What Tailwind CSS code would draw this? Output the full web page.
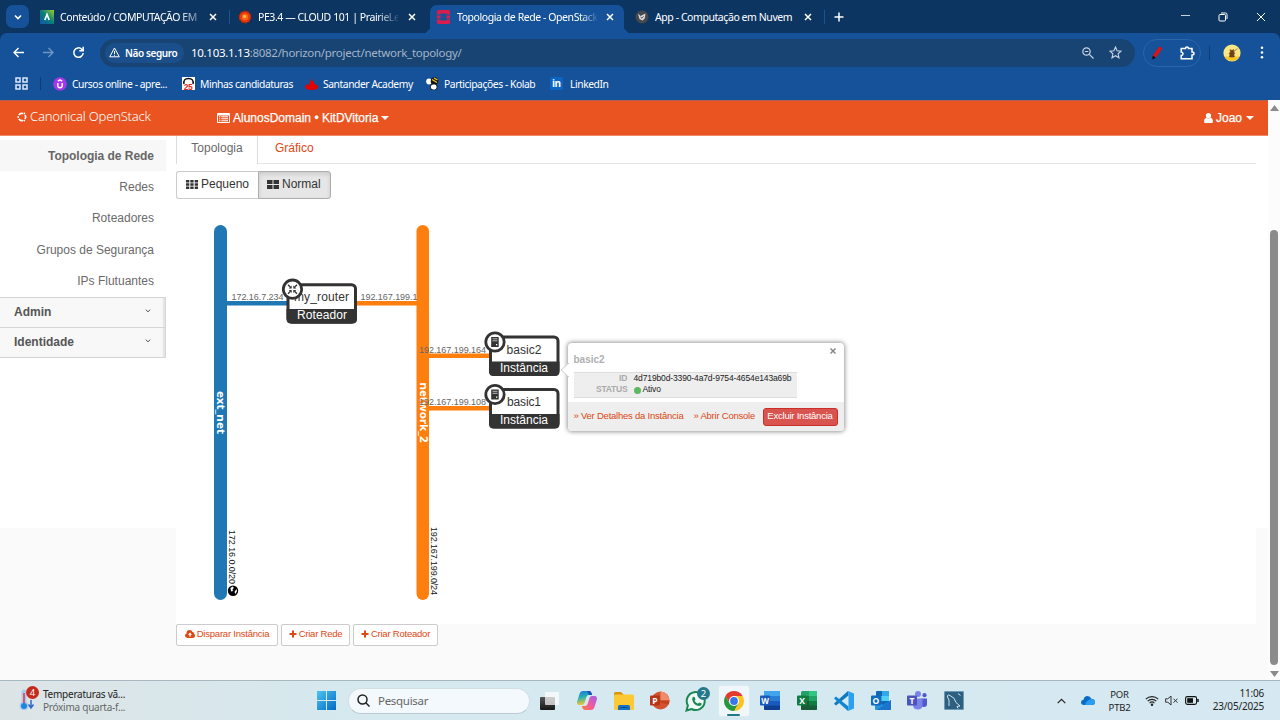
<!DOCTYPE html>
<html lang="pt-BR">
<head>
<meta charset="utf-8">
<title>Topologia de Rede - OpenStack</title>
<script src="https://cdn.jsdelivr.net/npm/@tailwindcss/browser@4"></script>
</head>
<body class="w-[1280px] h-[720px] overflow-hidden flex flex-col bg-[#fafafa] font-['Liberation_Sans',sans-serif] leading-none whitespace-nowrap">

<!-- Tab strip -->
<div class="flex h-[33px] bg-[#0c3562] text-white text-[10.5px] font-['Noto_Sans',sans-serif] items-center shrink-0">
  <div class="ml-[6px] w-[23px] h-[23px] rounded-[7px] bg-[#165299] flex items-center justify-center shrink-0">
    <svg class="w-[8px] h-[8px]" viewBox="0 0 8 8" fill="none" stroke="#fff" stroke-width="1.6"><path d="M1 2.5l3 3 3-3"/></svg>
  </div>
  <div class="flex items-center w-[199px] pl-[11px] shrink-0">
    <svg class="w-[14px] h-[14px] shrink-0" viewBox="0 0 14 14"><defs><linearGradient id="av" x1="0" y1="1" x2="1" y2="0"><stop offset="0" stop-color="#1256b0"/><stop offset=".5" stop-color="#077e7a"/><stop offset="1" stop-color="#9ad02b"/></linearGradient></defs><rect width="14" height="14" fill="url(#av)"/><path d="M4.8 10L7 4.5 9.200 10" fill="none" stroke="#fff" stroke-width="1.7"/></svg>
    <span class="ml-[6px] w-[139px] leading-[18px] tracking-[-0.43px] [mask-image:linear-gradient(90deg,#000_85%,rgba(0,0,0,0.35))]">Conteúdo / COMPUTAÇÃO EM</span>
    <svg class="ml-[10px] w-[8px] h-[8px] shrink-0" viewBox="0 0 8 8" stroke="#fff" stroke-width="1.5"><path d="M1 1l6 6M7 1l-6 6"/></svg>
  </div>
  <div class="w-px h-[14px] bg-[#1b5296] ml-[1px] shrink-0"></div>
  <div class="flex items-center w-[200px] pl-[8px] shrink-0">
    <svg class="w-[14px] h-[14px] shrink-0" viewBox="0 0 14 14"><circle cx="7" cy="7" r="5.800" fill="#e83a08"/><circle cx="7" cy="7" r="5.800" fill="none" stroke="#c22403" stroke-width="1.200" stroke-dasharray="2 1.600"/><circle cx="7" cy="7" r="3.200" fill="#fb6a18"/><circle cx="6.600" cy="6.600" r="1.500" fill="#ffc04a"/></svg>
    <span class="ml-[6px] w-[140px] leading-[18px] tracking-[-0.43px] [mask-image:linear-gradient(90deg,#000_85%,rgba(0,0,0,0.1))]">PE3.4 — CLOUD 101 | PrairieLea</span>
    <svg class="ml-[10px] w-[8px] h-[8px] shrink-0" viewBox="0 0 8 8" stroke="#fff" stroke-width="1.5"><path d="M1 1l6 6M7 1l-6 6"/></svg>
  </div>
  <div class="relative flex items-center self-end h-[28px] w-[194px] pl-[7px] pb-[5px] rounded-t-[7px] bg-[#165299] shrink-0">
    <div class="absolute -left-[7px] bottom-0 w-[7px] h-[7px] bg-[radial-gradient(circle_at_0_0,transparent_7px,#165299_7px)]"></div>
    <div class="absolute -right-[7px] bottom-0 w-[7px] h-[7px] bg-[radial-gradient(circle_at_100%_0,transparent_7px,#165299_7px)]"></div>
    <svg class="w-[13px] h-[14px] shrink-0" viewBox="0 0 13 14"><path fill="#dc1c4b" d="M1.500 0h10Q13 0 13 1.500V4.500H9.500V3.500h-6v1H0v-3Q0 0 1.500 0zM0 5.500h3.500v3H0zM9.500 5.500H13v3H9.500zM0 9.500h3.500v1h6v-1H13v3Q13 14 11.500 14h-10Q0 14 0 12.500z"/></svg>
    <span class="ml-[7px] w-[140px] leading-[18px] tracking-[-0.43px] [mask-image:linear-gradient(90deg,#000_88%,rgba(0,0,0,0.1))]">Topologia de Rede - OpenStack</span>
    <svg class="ml-[9px] w-[8px] h-[8px] shrink-0" viewBox="0 0 8 8" stroke="#fff" stroke-width="1.5"><path d="M1 1l6 6M7 1l-6 6"/></svg>
  </div>
  <div class="flex items-center w-[200px] pl-[11px] shrink-0">
    <svg class="w-[14px] h-[14px] shrink-0" viewBox="0 0 14 14"><circle cx="7" cy="7" r="6.500" fill="#45484c"/><path d="M3 3.500l2.500 2.500L7.500 5l3-1.500-.8 5-2.200 2-3-1.500z" fill="#dcdcdc"/><path d="M5.500 7l1.500 1.300 1.500-2" stroke="#555" fill="none"/></svg>
    <span class="ml-[6px] w-[139px] leading-[18px] tracking-[-0.43px]">App - Computação em Nuvem</span>
    <svg class="ml-[10px] w-[8px] h-[8px] shrink-0" viewBox="0 0 8 8" stroke="#fff" stroke-width="1.5"><path d="M1 1l6 6M7 1l-6 6"/></svg>
  </div>
  <div class="w-px h-[14px] bg-[#1b5296] shrink-0"></div>
  <svg class="ml-[9px] w-[10px] h-[10px] shrink-0" viewBox="0 0 10 10" stroke="#fff" stroke-width="1.5"><path d="M5 .5v9M.5 5h9"/></svg>
  <div class="ml-auto flex items-center gap-[28px] pr-[14px]">
    <svg class="w-[9px] h-[9px]" viewBox="0 0 9 9" stroke="#c7d2df"><path d="M0 3.500h9"/></svg>
    <svg class="w-[10px] h-[10px]" viewBox="0 0 10 10" fill="none" stroke="#fff"><rect x="1" y="2.500" width="6.500" height="6.500" rx="1"/><path d="M3 1h4.500Q9 1 9 2.500V7"/></svg>
    <svg class="w-[10px] h-[10px]" viewBox="0 0 10 10" stroke="#fff"><path d="M1 1l8 8M9 1L1 9"/></svg>
  </div>
</div>

<!-- Address bar -->
<div class="bg-[#0c3562] shrink-0">
<div class="flex items-center h-[39px] bg-[#165299] rounded-t-[7px]">
  <svg class="ml-[13px] w-[11px] h-[11px]" viewBox="0 0 11 11" fill="none" stroke="#fff" stroke-width="1.4"><path d="M11 5.500H1M5.500 1L1 5.500 5.500 10"/></svg>
  <svg class="ml-[19px] w-[11px] h-[11px]" viewBox="0 0 11 11" fill="none" stroke="#6f96c4" stroke-width="1.4"><path d="M0 5.500h10M5.500 1L10 5.500 5.500 10"/></svg>
  <svg class="ml-[18px] w-[13px] h-[13px]" viewBox="0 0 13 13" fill="none" stroke="#fff" stroke-width="1.500"><path d="M11.200 7a4.700 4.700 0 1 1-1.400-3.800L11 4.500"/><path d="M11.200 .8v4H7.300" /></svg>
  <div class="ml-[15px] w-[1035px] h-[28px] rounded-full bg-[#184474] flex items-center">
    <div class="ml-[5px] w-[79px] h-[20px] rounded-full bg-[#1b4f8c] flex items-center">
      <svg class="ml-[4px] w-[11px] h-[11px]" viewBox="0 0 11 11" fill="none" stroke="#fff"><path d="M5.500 1L10.300 9.800H.7z"/><path d="M5.500 4v3M5.500 7.800v1"/></svg>
      <span class="ml-[5px] text-white text-[10px] font-semibold font-['Noto_Sans',sans-serif] tracking-[-0.4px]">Não seguro</span>
    </div>
    <span class="ml-[7px] text-[11.5px] font-['Noto_Sans',sans-serif] text-[#a3b4c8] tracking-[-0.29px] leading-[18px]"><span class="text-white">10.103.1.13</span>:8082/horizon/project/network_topology/</span>
    <svg class="ml-auto w-[12px] h-[12px]" viewBox="0 0 12 12" fill="none" stroke="#c9d5e3" stroke-width="1.200"><circle cx="4.500" cy="4.500" r="3.700"/><path d="M7.300 7.300L11.500 11.500M2.800 4.500h3.400"/></svg>
    <svg class="ml-[15px] mr-[13px] w-[13px] h-[13px]" viewBox="0 0 13 13" fill="none" stroke="#c9d5e3" stroke-width="1.100"><path d="M6.500 1l1.600 3.700 4 .4-3 2.700.9 4-3.500-2.100L3 11.800l.9-4-3-2.700 4-.4z"/></svg>
  </div>
  <div class="ml-[8px] w-[58px] h-[28px] rounded-full border border-[#2b65a8] flex items-center">
    <svg class="ml-[7px] w-[12px] h-[14px]" viewBox="0 0 12 14"><path d="M7.500 1.500L10.500 .8 10.800 3 5 11.500 1.800 9.800z" fill="#e01010"/><path d="M1.800 9.800l3 2L1.300 13.500z" fill="#200"/></svg>
    <svg class="ml-[17px] w-[15px] h-[14px]" viewBox="0 0 15 14" fill="none" stroke="#fff" stroke-width="1.500"><path d="M1.200 2.500H5.500Q5.500 1 7 1t1.500 1.500H12V6q2 0 2 1.500T12 9v3.800H1.200V9.500Q3 9.300 3 7.700T1.200 6z"/></svg>
  </div>
  <div class="ml-[8px] w-px h-[14px] bg-[#0e3c73]"></div>
  <svg class="ml-[13px] w-[18px] h-[18px]" viewBox="0 0 18 18"><circle cx="9" cy="9" r="8.600" fill="#fbe784"/><path d="M1.500 12.500a8.500 8.500 0 0 0 15 0z" fill="#f6c52a"/><path d="M7 5.500l1 .8h1.500l1-.8.3 2.500 1 1.500-1 .5.500 3H6.500l.5-3L6 9.500l1.500-1.500zM10 8l4.500-3.500" fill="#704018" stroke="#704018" stroke-width=".6"/></svg>
  <svg class="ml-[19px] w-[4px] h-[13px]" viewBox="0 0 4 13" fill="#fff"><circle cx="2" cy="1.800" r="1.300"/><circle cx="2" cy="6.500" r="1.300"/><circle cx="2" cy="11.200" r="1.300"/></svg>
</div>
</div>

<!-- Bookmarks bar -->
<div class="flex items-center h-[28px] bg-[#165299] text-white text-[10.3px] font-['Noto_Sans',sans-serif] tracking-[-0.43px] pb-[5px] shrink-0">
  <svg class="ml-[15px] w-[13px] h-[13px]" viewBox="0 0 13 13" fill="none" stroke="#dbe8f7" stroke-width="1.500"><rect x="1" y="1" width="4" height="4"/><rect x="8" y="1" width="4" height="4"/><rect x="1" y="8" width="4" height="4"/><rect x="8" y="8" width="4" height="4"/></svg>
  <div class="ml-[12px] w-px h-[13px] bg-[#0e3c73]"></div>
  <svg class="ml-[12px] w-[14px] h-[14px]" viewBox="0 0 14 14"><circle cx="7" cy="7" r="6.800" fill="#a435f0"/><path d="M4.800 6v2.500a2.200 2.200 0 0 0 4.400 0V6M4.800 4.200L7 2.900l2.200 1.300" fill="none" stroke="#fff" stroke-width="1.400"/></svg>
  <span class="ml-[5px] w-[98px] leading-[18px]">Cursos online - apre...</span>
  <svg class="ml-[12px] w-[13px] h-[13px]" viewBox="0 0 13 13"><rect width="13" height="13" fill="#fff"/><path d="M2 7Q1 1.500 6.500 1.500T11 7" fill="#fff" stroke="#111" stroke-width="1.500"/><text x="1.800" y="12.500" font-size="8.500" font-weight="bold" fill="#e22b22" font-family="Liberation Sans">25</text></svg>
  <span class="ml-[5px] w-[92px] leading-[18px]">Minhas candidaturas</span>
  <svg class="ml-[13px] w-[13px] h-[12px]" viewBox="0 0 13 12" fill="#e60000"><path d="M6.200 0q.3 1.500 1.500 3t1.500 3Q13 7 13 8.800 12.500 12 6.500 12T0 8.800Q0 7 3.300 6q0 1.500 1 2.500Q3.500 6 5 4T6.200 0z"/></svg>
  <span class="ml-[5px] w-[90px] leading-[18px]">Santander Academy</span>
  <svg class="ml-[13px] w-[13px] h-[13px]" viewBox="0 0 13 13"><ellipse cx="3" cy="4.500" rx="2.800" ry="3" fill="#fff"/><circle cx="8.500" cy="4" r="3.800" fill="#141414"/><path d="M6 2.500l5 3M8 1l3.500 2" stroke="#f3c52d" stroke-width="1.300"/><rect x="4.500" y="7" width="6.500" height="6" rx="2.500" fill="#fff" stroke="#141414"/></svg>
  <span class="ml-[5px] w-[92px] leading-[18px]">Participações - Kolab</span>
  <svg class="ml-[14px] w-[13px] h-[13px]" viewBox="0 0 13 13"><rect width="13" height="13" rx="1.500" fill="#0a66c2"/><text x="2" y="10.300" font-size="10" font-weight="bold" fill="#fff" font-family="Open Sans">in</text></svg>
  <span class="ml-[7px] leading-[18px]">LinkedIn</span>
</div>

<!-- Page viewport -->
<div class="flex h-[580px] shrink-0">
  <div class="w-[1268px] flex flex-col shrink-0">
    <header class="flex items-center h-[36px] bg-[#e95420] border-t border-t-[#b0604f] border-b border-b-[#f08a66] text-white text-[12px] shrink-0">
      <svg class="ml-[17px] mb-[3px] w-[10px] h-[10px]" viewBox="0 0 10 10" fill="none" stroke="#fff" stroke-width="1.700"><path d="M1.900 3.200A3.600 3.600 0 0 1 5.900 1.500M7.900 2.900A3.600 3.600 0 0 1 7.900 7.100M5.900 8.500A3.600 3.600 0 0 1 1.900 6.800"/><g fill="#fff" stroke="none"><circle cx="1.200" cy="5" r=".9"/><circle cx="7.300" cy="1.400" r=".9"/><circle cx="7.300" cy="8.600" r=".9"/></g></svg>
      <span class="ml-[3px] mb-[4px] w-[122px] text-[13px] font-light font-['Noto_Sans',sans-serif] leading-[18px] tracking-[-0.2px]">Canonical OpenStack</span>
      <svg class="ml-[65px] w-[13px] h-[10px]" viewBox="0 0 13 10"><path fill="#fff" fill-rule="evenodd" d="M1 0h11q1 0 1 1v8q0 1-1 1H1Q0 10 0 9V1Q0 0 1 0zM1 2.500V9h11V2.500zM2 3.300h1.300v1H2zM4.300 3.300H11v1H4.300zM2 5.300h1.300v1H2zM4.300 5.300H11v1H4.300zM2 7.300h1.300v1H2zM4.300 7.300H11v1H4.300z"/></svg>
      <span class="ml-[3px] w-[146px] [-webkit-text-stroke:0.25px_#fff]">AlunosDomain • KitDVitoria</span>
      <svg class="ml-[2px] w-[8px] h-[4px]" viewBox="0 0 8 4"><path fill="#fff" d="M0 0h8L4 4z"/></svg>
      <svg class="ml-auto w-[9px] h-[10px]" viewBox="0 0 9 10" fill="#fff"><circle cx="4.500" cy="2.700" r="2.600"/><path d="M2.200 4.800Q0 5.500 0 8.500 0 10 1.500 10h6Q9 10 9 8.500 9 5.500 6.800 4.800 4.500 6.300 2.200 4.800z"/></svg>
      <span class="ml-[3px] w-[27px] [-webkit-text-stroke:0.25px_#fff]">Joao</span>
      <svg class="ml-[3px] mr-[14px] w-[8px] h-[4px]" viewBox="0 0 8 4"><path fill="#fff" d="M0 0h8L4 4z"/></svg>
    </header>

    <div class="flex items-start">
      <!-- Side navigation -->
      <nav class="w-[176px] h-[392px] bg-white text-[12px] text-[#6a6a6a] shrink-0">
        <div class="w-[166px] pt-[4px] text-right">
          <div class="h-[31px] leading-[32px] pr-[12px] bg-[#f7f7f7] font-bold text-[#666] tracking-[-0.03px]">Topologia de Rede</div>
          <div class="h-[31px] leading-[32px] pr-[12px]">Redes</div>
          <div class="h-[32px] leading-[32px] pr-[12px]">Roteadores</div>
          <div class="h-[31px] leading-[32px] pr-[12px]">Grupos de Segurança</div>
          <div class="h-[32px] leading-[32px] pr-[12px]">IPs Flutuantes</div>
        </div>
        <div class="w-[166px] border-t border-b border-r border-[#d6d6d6] bg-[#f8f8f8] font-bold text-[#555] shadow-[inset_-3px_0_2px_-1px_#e2e2e2]">
          <div class="flex items-center justify-between h-[30px] pl-[14px] pr-[14px] pb-[2px] border-b border-[#d6d6d6]">Admin<svg class="w-[6px] h-[4px] mb-[2px]" viewBox="0 0 6 4" fill="none" stroke="#555"><path d="M.7.6L3 2.800 5.300.6"/></svg></div>
          <div class="flex items-center justify-between h-[29px] pl-[14px] pr-[14px] pb-[2px]">Identidade<svg class="w-[6px] h-[4px] mb-[2px]" viewBox="0 0 6 4" fill="none" stroke="#555"><path d="M.7.6L3 2.800 5.300.6"/></svg></div>
        </div>
      </nav>

      <!-- Topology panel -->
      <main class="relative w-[1080px] shrink-0">
        <div class="h-[488px] bg-white flex flex-col">
          <div class="flex h-[28px] text-[12px] leading-[24px]">
            <div class="w-[82px] border-x border-[#ddd] text-center text-[#6a6a6a]">Topologia</div>
            <div class="flex-1 border-b border-[#e4e4e4] pl-[17px] text-[#dd4814]">Gráfico</div>
          </div>
          <div class="flex mt-[7px] h-[28px] text-[12px] text-[#333]">
            <div class="w-[82px] border border-r-0 border-[#ccc] rounded-l-[3px] flex items-center pb-[2px] pl-[9px]">
              <svg class="w-[12px] h-[9px] mr-[3px]" viewBox="0 0 12 9" fill="#333"><path d="M0 0h3.300v2.400H0zM4.300 0h3.300v2.400H4.300zM8.700 0H12v2.400H8.700zM0 3.300h3.300v2.400H0zM4.300 3.300h3.300v2.400H4.300zM8.700 3.300H12v2.400H8.700zM0 6.600h3.300V9H0zM4.300 6.600h3.300V9H4.300zM8.700 6.600H12V9H8.700z"/></svg>Pequeno</div>
            <div class="w-[73px] border border-[#adadad] rounded-r-[3px] bg-[#e6e6e6] shadow-[inset_0_2px_4px_rgba(0,0,0,0.125)] flex items-center pb-[2px] pl-[8px]">
              <svg class="w-[12px] h-[9px] mr-[3px]" viewBox="0 0 12 9" fill="#333"><path d="M0 0h5.500v4H0zM6.500 0H12v4H6.500zM0 5h5.500v4H0zM6.500 5H12v4H6.500z"/></svg>Normal</div>
          </div>

          <svg class="mt-[9px] w-[1080px] h-[410px]" viewBox="176 208 1080 410" font-family="Liberation Sans, sans-serif">
            <rect x="214" y="225" width="13" height="375" rx="6.500" fill="#1f77b4"/>
            <rect x="416.500" y="225" width="12.500" height="375" rx="6.250" fill="#ff7f0e"/>
            <g font-family="Noto Sans, sans-serif" font-weight="bold" font-size="11" fill="#fff">
              <text transform="translate(217 391) rotate(90)" textLength="43" lengthAdjust="spacingAndGlyphs">ext_net</text>
              <text transform="translate(419.500 382.500) rotate(90)" textLength="60" lengthAdjust="spacingAndGlyphs">network_2</text>
            </g>
            <rect x="227" y="301" width="60" height="4.500" fill="#1f77b4"/>
            <rect x="356" y="301" width="61" height="4.500" fill="#ff7f0e"/>
            <rect x="428" y="353.500" width="62" height="4.500" fill="#ff7f0e"/>
            <rect x="428" y="406" width="62" height="4.500" fill="#ff7f0e"/>
            <g font-size="9" fill="#666">
              <text x="231.500" y="300" textLength="52">172.16.7.234</text>
              <svg x="356" y="290" width="61" height="14"><text x="4.500" y="10" textLength="57">192.167.199.1</text></svg>
              <text x="419" y="352.500" textLength="67">192.167.199.164</text>
              <text x="419" y="405" textLength="67">192.167.199.108</text>
            </g>
            <g font-size="9" fill="#111">
              <text transform="translate(229 530) rotate(90)" textLength="54">172.16.0.0/20</text>
              <text transform="translate(431 527) rotate(90)" textLength="68">192.167.199.0/24</text>
            </g>
            <circle cx="233" cy="590.700" r="5.200" fill="#000"/>
            <path d="M230.500 588l2-1.500 1.500 1.500-1.500 1 .5 2-2 .5zM234.500 592l2-3 .5 2-1.500 3z" fill="#fff"/>

            <g id="router">
              <rect x="288" y="284.700" width="67.500" height="37.500" rx="4" fill="#fff" stroke="#333" stroke-width="3"/>
              <text x="349" y="301" text-anchor="end" font-size="12" fill="#333" textLength="55">my_router</text>
              <path d="M286.500 309H357v10q0 4.500-4.500 4.500H291q-4.500 0-4.500-4.500z" fill="#333"/>
              <text x="322" y="319" text-anchor="middle" font-size="12" fill="#fff" textLength="50">Roteador</text>
              <circle cx="292.500" cy="289.200" r="9.200" fill="#fff" stroke="#333" stroke-width="2.800"/>
              <path d="M288 284.700l2.500 2.500M297 284.700l-2.500 2.500M288 293.700l2.500-2.500M297 293.700l-2.500-2.500" fill="none" stroke="#333" stroke-width="1.300"/>
              <path d="M291.700 288.400h-3l3-3zM293.300 288.400h3l-3-3zM291.700 290h-3l3 3zM293.300 290h3l-3 3z" fill="#333"/>
            </g>
            <g id="basic2">
              <rect x="490.500" y="337" width="67.500" height="37.500" rx="4" fill="#fff" stroke="#333" stroke-width="3"/>
              <text x="524" y="353.500" text-anchor="middle" font-size="12" fill="#333" textLength="35">basic2</text>
              <path d="M489 361.500h70.500v10q0 4.500-4.500 4.500H493.500q-4.500 0-4.500-4.500z" fill="#333"/>
              <text x="524" y="371.500" text-anchor="middle" font-size="12" fill="#fff" textLength="48">Instância</text>
              <circle cx="495" cy="342" r="9.200" fill="#fff" stroke="#333" stroke-width="2.800"/>
              <rect x="491.200" y="337" width="7.500" height="10" fill="#333"/><path d="M492.500 338.800h5M492.500 340.800h5" stroke="#ddd" stroke-width=".8"/><rect x="496" y="344" width="1.300" height="1.300" fill="#fff"/>
            </g>
            <g id="basic1">
              <rect x="490.500" y="389.500" width="67.500" height="37.500" rx="4" fill="#fff" stroke="#333" stroke-width="3"/>
              <text x="524" y="406" text-anchor="middle" font-size="12" fill="#333" textLength="34">basic1</text>
              <path d="M489 414h70.500v10q0 4.500-4.500 4.500H493.500q-4.500 0-4.500-4.500z" fill="#333"/>
              <text x="524" y="424" text-anchor="middle" font-size="12" fill="#fff" textLength="48">Instância</text>
              <circle cx="495" cy="394.500" r="9.200" fill="#fff" stroke="#333" stroke-width="2.800"/>
              <rect x="491.200" y="389.500" width="7.500" height="10" fill="#333"/><path d="M492.500 391.300h5M492.500 393.300h5" stroke="#ddd" stroke-width=".8"/><rect x="496" y="396.500" width="1.300" height="1.300" fill="#fff"/>
            </g>
          </svg>
        </div>

        <div class="flex gap-[3px] text-[9.5px] text-[#dd4814] tracking-[-0.22px]">
          <div class="w-[102px] h-[22px] border border-[#ccc] rounded-[2px] bg-white flex items-center justify-center pb-[2px]"><svg class="w-[10px] h-[8px] mr-[2px]" viewBox="0 0 10 8"><path fill="#dd4814" d="M2.500 8Q0 8 0 5.600 0 4 1.500 3.400 1.500 0 4.600 0 7 0 7.500 2 9 1.800 9 3.500 10 4.200 10 5.700 10 8 7.700 8z"/><path d="M5 2.500L2.900 4.800h1.400v1.700h1.400V4.800h1.400z" fill="#fff"/></svg>Disparar Instância</div>
          <div class="w-[69px] h-[22px] border border-[#ccc] rounded-[2px] bg-white flex items-center justify-center pb-[2px]"><svg class="w-[8px] h-[8px] mr-[2px]" viewBox="0 0 8 8" stroke="#dd4814" stroke-width="2"><path d="M4 .5v7M.5 4h7"/></svg>Criar Rede</div>
          <div class="w-[85px] h-[22px] border border-[#ccc] rounded-[2px] bg-white flex items-center justify-center pb-[2px]"><svg class="w-[8px] h-[8px] mr-[2px]" viewBox="0 0 8 8" stroke="#dd4814" stroke-width="2"><path d="M4 .5v7M.5 4h7"/></svg>Criar Roteador</div>
        </div>

        <!-- Instance balloon -->
        <div class="absolute left-[391.5px] top-[207px] w-[276px] h-[88px] rounded-[4px] bg-white shadow-[0_0_4px_1px_rgba(0,0,0,0.4)] flex flex-col">
          <svg class="absolute -left-[8px] top-[19px] w-[9px] h-[16px]" viewBox="0 0 9 16"><path d="M9 1L1 8l8 7" fill="#fff" stroke="#ccc"/><path d="M8.500 2v12" stroke="#fff" stroke-width="2"/></svg>
          <div class="flex justify-between pt-[5px] pl-[6px] pr-[8px] h-[29px]">
            <span class="pt-[7px] text-[10px] font-bold text-[#b0b0b0]">basic2</span>
            <svg class="w-[6px] h-[6px]" viewBox="0 0 6 6" stroke="#888" stroke-width="1.500"><path d="M.5.5l5 5M5.500.5l-5 5"/></svg>
          </div>
          <div class="ml-[6px] w-[223px] h-[26px] bg-[#eee] border-y border-[#ddd] flex flex-col text-[8.5px]">
            <div class="flex h-[10px] items-center"><span class="w-[54px] text-right text-[#aaa] font-bold">ID</span><span class="ml-[6px] text-[#222] tracking-[-0.13px]">4d719b0d-3390-4a7d-9754-4654e143a69b</span></div>
            <div class="flex h-[14px] items-center pb-[1px]"><span class="w-[54px] text-right text-[#aaa] font-bold tracking-[-0.2px]">STATUS</span><span class="ml-[6px] mt-[1px] w-[7px] h-[7px] rounded-full bg-[#5cb85c]"></span><span class="ml-[2px] text-[#222] tracking-[-0.1px]">Ativo</span></div>
          </div>
          <div class="mt-auto h-[29px] rounded-b-[4px] bg-[#eee] flex items-center pl-[6px] text-[9.5px] text-[#dd4814] tracking-[-0.23px]">
            <span class="w-[120px] pb-[2px]">» Ver Detalhes da Instância</span>
            <span class="w-[69px] pb-[2px]">» Abrir Console</span>
            <span class="w-[75px] h-[18px] pb-[1px] rounded-[3px] border border-[#c9302c] bg-[#d9534f] text-white flex items-center justify-center">Excluir Instância</span>
          </div>
        </div>
      </main>
      <div class="w-[12px] h-[392px] bg-white"></div>
    </div>
  </div>
  <!-- Scrollbar -->
  <div class="w-[12px] bg-[#fcfcfc] flex flex-col items-center shrink-0">
    <svg class="mt-[5px] w-[9px] h-[6px]" viewBox="0 0 9 6"><path d="M4.500 0L9 6H0z" fill="#8b8b8b"/></svg>
    <div class="mt-[119px] w-[8px] h-[435px] rounded-full bg-[#8b8b8b]"></div>
    <svg class="mt-[6px] w-[9px] h-[6px]" viewBox="0 0 9 6"><path d="M4.500 6L9 0H0z" fill="#8b8b8b"/></svg>
  </div>
</div>

<!-- Taskbar -->
<footer class="flex items-center h-[40px] border-t border-[#a9b7c0] bg-[linear-gradient(90deg,#dde4e6_0%,#d5e9ef_28%,#d6e9f2_100%)] text-[#222] text-[10px] font-['Noto_Sans',sans-serif] shrink-0">
  <svg class="ml-[17px] mb-[3px] w-[24px] h-[30px]" viewBox="0 0 24 30"><path d="M4.500 8a2.500 2.500 0 0 1 5 0v10a4.500 4.500 0 1 1-5 0z" fill="#a9cdf2"/><path d="M6 9h2v10H6z" fill="#d65a6b"/><circle cx="7" cy="22" r="3" fill="#1b86e0"/><path d="M14 16v7M11.500 20.500L14 24l2.500-3.500" stroke="#3467c9" stroke-width="1.500" fill="none"/><circle cx="15.500" cy="8.500" r="6.500" fill="#c42b1c"/><text x="15.500" y="12" font-size="9.500" fill="#fff" text-anchor="middle" font-family="Noto Sans">4</text></svg>
  <div class="ml-[2px] w-[84px] flex flex-col text-[10px] leading-[13px] tracking-[-0.25px]"><span>Temperaturas vã...</span><span class="text-[#666]">Próxima quarta-f...</span></div>
  <svg class="ml-[190px] w-[19px] h-[19px]" viewBox="0 0 19 19"><defs><linearGradient id="wn" x1="0" y1="0" x2="1" y2="1"><stop offset="0" stop-color="#4cc4f2"/><stop offset="1" stop-color="#0369c4"/></linearGradient></defs><path fill="url(#wn)" d="M0 0h9v9H0zM10 0h9v9h-9zM0 10h9v9H0zM10 10h9v9h-9z"/></svg>
  <div class="ml-[12px] w-[182px] h-[26px] rounded-full bg-[#f3f9fc] border border-[#d3dfe5] border-b-[#bccbd2] flex items-center">
    <svg class="ml-[8px] w-[13px] h-[13px]" viewBox="0 0 13 13" fill="none" stroke="#222" stroke-width="1.500"><circle cx="5.500" cy="5.500" r="4.500"/><path d="M8.800 8.800L12.500 12.500"/></svg>
    <span class="ml-[8px] text-[11.5px] text-[#666] leading-[16px] tracking-[-0.3px]">Pesquisar</span>
  </div>
  <div class="ml-[2px] flex">
    <div class="w-[36.7px] h-[32px] flex items-center justify-center"><svg class="w-[20px] h-[20px]" viewBox="0 0 20 20"><defs><linearGradient id="tv" x1="0" y1="0" x2="0" y2="1"><stop offset="0" stop-color="#555"/><stop offset="1" stop-color="#161616"/></linearGradient></defs><rect x="0" y="6" width="15" height="13" rx="1" fill="url(#tv)"/><rect x="5" y="1" width="14" height="13" rx="1" fill="#fff" opacity=".7"/></svg></div>
    <div class="w-[36.7px] h-[32px] flex items-center justify-center"><svg class="w-[20px] h-[19px]" viewBox="0 0 20 19"><defs><linearGradient id="c1" x1="0" y1="0" x2=".2" y2="1"><stop offset="0" stop-color="#1a72dc"/><stop offset=".5" stop-color="#2bb4b0"/><stop offset="1" stop-color="#f2c531"/></linearGradient><linearGradient id="c2" x1="1" y1="0" x2="0" y2="1"><stop offset="0" stop-color="#9a62e8"/><stop offset=".5" stop-color="#ef5aa2"/><stop offset="1" stop-color="#fb7c3f"/></linearGradient></defs><path d="M6 0h6q2 0 2.500 2l.6 2H12q-2 0-2.600 2L7.500 12Q7 14 5 14H2.500Q-.8 14 .3 10L2.500 3Q3.500 0 6 0z" fill="url(#c1)"/><path d="M10 0h2q2 0 2.500 2l.6 2H12z" fill="#1b4fc0"/><path d="M14 19H8q-2 0-2.500-2l-.6-2H8q2 0 2.600-2l1.900-6Q13 5 15 5h2.500q3.300 0 2.200 4l-2.200 7q-1 3-3.500 3z" fill="url(#c2)"/></svg></div>
    <div class="w-[36.7px] h-[32px] flex items-center justify-center"><svg class="w-[20px] h-[18px]" viewBox="0 0 20 18"><path d="M0 1.500Q0 0 1.500 0H7l2.500 2.500V8H0z" fill="#d9940c"/><rect y="2.500" width="20" height="15.500" rx="1.500" fill="#fcc934"/><path d="M4 18v-3.500q0-1.500 1.500-1.500h9q1.500 0 1.500 1.500V18z" fill="#1371c8"/><path d="M6.500 15.500h7" stroke="#0b4d91"/></svg></div>
    <div class="w-[36.7px] h-[32px] flex items-center justify-center"><svg class="w-[20px] h-[19px]" viewBox="0 0 20 19"><circle cx="10.500" cy="9.500" r="9" fill="#d3512f"/><path d="M10.500.5a9 9 0 0 1 9 9h-9z" fill="#f08b6d"/><path d="M1.500 9.500h18a9 9 0 0 1-1 4z" fill="#c5421f"/><rect x="0" y="4.500" width="10" height="10" rx="1" fill="#b83518"/><text x="5" y="12.500" font-size="8.500" font-weight="bold" fill="#fff" text-anchor="middle" font-family="Open Sans">P</text></svg></div>
    <div class="w-[36.7px] h-[32px] flex items-center justify-center"><svg class="w-[26px] h-[28px]" viewBox="0 0 26 28"><path d="M2.500 23.500l1.400-5A9 9 0 1 1 7.500 22z" fill="#eef8f4" stroke="#1a8754" stroke-width="2"/><path d="M8.500 10.500q1.500-1.500 2.500.5l.5 1.500-1 1.200q1.200 2.200 3.500 3l1.200-1.200 2.500 1q0 2.500-3 2.500-5.500-1-6.500-6.500z" fill="#1a8754"/><circle cx="19.500" cy="6.500" r="6.500" fill="#23788b"/><text x="19.500" y="10" font-size="9.500" fill="#fff" text-anchor="middle" font-family="Noto Sans">2</text></svg></div>
    <div class="w-[36.7px] h-[32px] flex items-center justify-center"><div class="w-[32px] h-[32px] rounded-[3px] bg-[#f0f7fb] border border-[#dfeaf0] flex flex-col items-center pt-[5px]"><svg class="w-[20px] h-[20px] shrink-0" viewBox="0 0 20 20"><path d="M1.340 5A10 10 0 0 1 18.660 5H10L5.670 12.500z" fill="#e33b2e"/><path d="M18.660 5A10 10 0 0 1 10 20l4.330-7.500L10 5z" fill="#fcc31e"/><path d="M1.340 5A10 10 0 0 0 10 20l4.330-7.500H5.670z" fill="#24983e"/><circle cx="10" cy="10" r="5" fill="#fff"/><circle cx="10" cy="10" r="3.900" fill="#3478ea"/></svg><div class="mt-[3px] w-[13px] h-[2px] rounded-full bg-[#23788b] shrink-0"></div></div></div>
    <div class="w-[36.7px] h-[32px] flex items-center justify-center"><svg class="w-[20px] h-[19px]" viewBox="0 0 20 19"><rect x="4" width="16" height="19" rx="1.500" fill="#2b7cd3"/><path d="M4 0h16v5H4z" fill="#41a5ee"/><path d="M4 10h16v5H4z" fill="#185abd"/><path d="M4 14.500h16V18q0 1-1 1H5q-1 0-1-1z" fill="#103f91"/><rect y="4.500" width="10" height="10" rx="1" fill="#185abd"/><text x="5" y="12.500" font-size="8" font-weight="bold" fill="#fff" text-anchor="middle" font-family="Open Sans">W</text></svg></div>
    <div class="w-[36.7px] h-[32px] flex items-center justify-center"><svg class="w-[20px] h-[19px]" viewBox="0 0 20 19"><rect x="4" width="16" height="19" rx="1.500" fill="#21a366"/><path d="M12 0h8v5h-8z" fill="#33c481"/><path d="M4 5h8v5H4zM12 10h8v5h-8z" fill="#107c41"/><path d="M4 10h8v5H4zM4 14.500h16V18q0 1-1 1H5q-1 0-1-1z" fill="#185c37"/><rect y="4.500" width="10" height="10" rx="1" fill="#107c41"/><text x="5" y="12.500" font-size="8.500" font-weight="bold" fill="#fff" text-anchor="middle" font-family="Open Sans">X</text></svg></div>
    <div class="w-[36.7px] h-[32px] flex items-center justify-center"><svg class="w-[20px] h-[20px]" viewBox="0 0 20 20"><path d="M14.500 4.500L2 14.500.3 13 .3 12.300 14 0z" fill="#0f79c0"/><path d="M14.500 15.500L2 5.500.3 7v.7L14 20z" fill="#1187d2"/><path d="M14 0l6 2.500v15L14 20l.5-4.500v-11z" fill="#2ba0ee"/></svg></div>
    <div class="w-[36.7px] h-[32px] flex items-center justify-center"><svg class="w-[20px] h-[19px]" viewBox="0 0 20 19"><rect x="5" width="13" height="14" rx="1" fill="#1066b8"/><path d="M11 0h7v5h-7zM5 5h6v5H5z" fill="#32a9e7"/><path d="M11 5h7v5h-7z" fill="#50d0f5"/><path d="M4 9l8 5 8-5v9q0 1-1 1H5q-1 0-1-1z" fill="#2493e0"/><path d="M20 9v9q0 1-1 1H6z" fill="#1b74c9"/><rect y="4.500" width="10" height="10" rx="1" fill="#0f6cbd"/><text x="5" y="12.500" font-size="8.500" font-weight="bold" fill="#fff" text-anchor="middle" font-family="Open Sans">O</text></svg></div>
    <div class="w-[36.7px] h-[32px] flex items-center justify-center"><svg class="w-[20px] h-[19px]" viewBox="0 0 20 19"><circle cx="17.500" cy="4.200" r="2.100" fill="#5059c9"/><path d="M14 7.500h6V13q0 3-3 3-2 0-3-1.500z" fill="#5059c9"/><circle cx="11" cy="3" r="3" fill="#7b83eb"/><path d="M6 7.500h9.500V14q0 4.500-4.700 4.500T6 14z" fill="#7b83eb"/><rect y="4.500" width="10" height="10" rx="1" fill="#4b53bc"/><text x="5" y="12.500" font-size="8.500" font-weight="bold" fill="#fff" text-anchor="middle" font-family="Open Sans">T</text></svg></div>
    <div class="w-[36.7px] h-[32px] flex items-center justify-center"><svg class="w-[20px] h-[19px]" viewBox="0 0 20 19"><rect width="20" height="19" rx="2" fill="#2c5f80"/><rect x=".5" y=".5" width="19" height="18" rx="1.500" fill="none" stroke="#6c9ab5"/><path d="M5 15V9L3.500 6Q3 3 6 4.500q5 2 6 7l4 3.500-3 .5 1 2" fill="none" stroke="#cfe2ed"/><path d="M14 2.500l2.500 2" stroke="#cfe2ed"/></svg></div>
  </div>
  <div class="ml-auto flex items-center">
    <svg class="w-[9px] h-[6px]" viewBox="0 0 9 6" fill="none" stroke="#222" stroke-width="1.200"><path d="M.7 5.200L4.500 1.300l3.800 3.900"/></svg>
    <svg class="ml-[15px] w-[14px] h-[9px]" viewBox="0 0 14 9"><path d="M3 9Q0 9 0 6.300 0 4 2.500 3.700 3.200 0 6.500 0 9.200 0 10.300 2.800 14 3 14 6 14 9 11 9z" fill="#0a6cc8"/><path d="M4 9q1-4.500 6-6Q14 3.200 14 6t-3 3z" fill="#2a9df0"/></svg>
    <div class="ml-[13px] w-[23px] text-center leading-[13px] text-[9.5px] tracking-[-0.2px]">POR<br>PTB2</div>
    <svg class="ml-[14px] w-[14px] h-[11px]" viewBox="0 0 14 11" fill="none" stroke="#222" stroke-width="1.100"><path d="M.8 4.200a8.700 8.700 0 0 1 12.400 0M2.700 6.200a6 6 0 0 1 8.600 0M4.600 8.100a3.400 3.400 0 0 1 4.800 0"/><circle cx="7" cy="9.700" r=".7" fill="#222"/></svg>
    <svg class="ml-[6px] w-[13px] h-[11px]" viewBox="0 0 13 11" fill="none" stroke="#333"><path d="M.6 3.800h2.200L6 1v9L2.800 7.200H.6zM8.500 3.700l4 4M12.500 3.700l-4 4"/></svg>
    <svg class="ml-[7px] w-[14px] h-[9px]" viewBox="0 0 14 9"><rect x=".6" y=".6" width="11" height="7.800" rx="1.800" fill="none" stroke="#111" stroke-width="1.100"/><rect x="2.200" y="2.200" width="5.800" height="4.600" fill="#111"/><path d="M13 3v3" stroke="#111" stroke-width="1.500"/></svg>
    <div class="ml-[12px] mr-[16px] w-[53px] flex flex-col items-end leading-[13px] text-[10px] tracking-[-0.2px] pb-[2px]"><span>11:06</span><span>23/05/2025</span></div>
  </div>
</footer>
</body>
</html>
